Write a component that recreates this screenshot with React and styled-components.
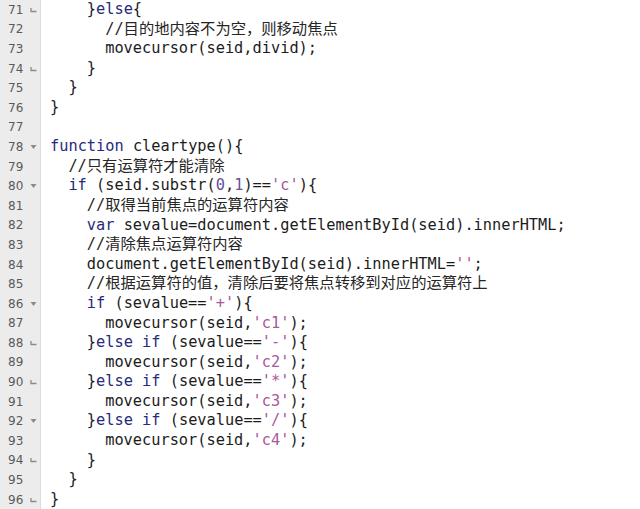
import React from 'react';
import styled, { createGlobalStyle } from 'styled-components';

const GlobalStyle = createGlobalStyle`
  html, body {
    margin: 0;
    padding: 0;
    background: #ffffff;
  }
`;

const LINE_H = 19.6;

const Editor = styled.div`
  display: flex;
  width: 640px;
  height: 509px;
  overflow: hidden;
  background: #ffffff;
`;

const Gutter = styled.div`
  width: 40px;
  flex-shrink: 0;
  background: #ececec;
  border-right: 1px solid #dcdcdc;
`;

const LineNo = styled.div`
  display: flex;
  align-items: center;
  height: ${LINE_H}px;
  padding-left: 8px;
  font-family: 'DejaVu Sans', 'Noto Sans', sans-serif;
  font-size: 12px;
  color: #5a5a5a;
`;

const Num = styled.span`
  width: 20px;
`;

const FoldBox = styled.span`
  display: flex;
  align-items: center;
  justify-content: center;
  width: 8px;
  margin-left: 1px;
`;

const Code = styled.div`
  flex: 1;
  padding-left: 9px;
  font-family: 'DejaVu Sans Mono', 'Noto Sans CJK SC', monospace;
  font-size: 15.3px;
  color: #1c1c1c;
`;

const CodeLine = styled.div`
  height: ${LINE_H}px;
  line-height: ${LINE_H}px;
  white-space: pre;
  padding-left: ${(p) => p.$indent * 18.4}px;
`;

const Kw = styled.span`
  color: #262a78;
`;

const Str = styled.span`
  color: #a8589a;
`;

const Digit = styled.span`
  color: #6450a0;
`;

const Comment = styled.span`
  color: #262626;
  font-family: 'DejaVu Sans Mono', 'Noto Sans CJK SC', monospace;
`;

const LINES = [
  [71, 'end', 2, '}else{'],
  [72, null, 3, '//目的地内容不为空，则移动焦点'],
  [73, null, 3, 'movecursor(seid,divid);'],
  [74, 'end', 2, '}'],
  [75, null, 1, '}'],
  [76, null, 0, '}'],
  [77, null, 0, ''],
  [78, 'open', 0, 'function cleartype(){'],
  [79, null, 1, '//只有运算符才能清除'],
  [80, 'open', 1, "if (seid.substr(0,1)=='c'){"],
  [81, null, 2, '//取得当前焦点的运算符内容'],
  [82, null, 2, 'var sevalue=document.getElementById(seid).innerHTML;'],
  [83, null, 2, '//清除焦点运算符内容'],
  [84, null, 2, "document.getElementById(seid).innerHTML='';"],
  [85, null, 2, '//根据运算符的值，清除后要将焦点转移到对应的运算符上'],
  [86, 'open', 2, "if (sevalue=='+'){"],
  [87, null, 3, "movecursor(seid,'c1');"],
  [88, 'end', 2, "}else if (sevalue=='-'){"],
  [89, null, 3, "movecursor(seid,'c2');"],
  [90, 'end', 2, "}else if (sevalue=='*'){"],
  [91, null, 3, "movecursor(seid,'c3');"],
  [92, 'open', 2, "}else if (sevalue=='/'){"],
  [93, null, 3, "movecursor(seid,'c4');"],
  [94, 'end', 2, '}'],
  [95, null, 1, '}'],
  [96, 'end', 0, '}'],
];

// split a line into coloured pieces
function highlight(text) {
  if (text.startsWith('//')) return [<Comment key="c">{text}</Comment>];
  const re = /('[^']*')|\b(function|if|else|var)\b|\b(\d+)\b/g;
  const out = [];
  let last = 0;
  let m;
  let k = 0;
  while ((m = re.exec(text))) {
    if (m.index > last) out.push(text.slice(last, m.index));
    if (m[1]) out.push(<Str key={k++}>{m[1]}</Str>);
    else if (m[2]) out.push(<Kw key={k++}>{m[2]}</Kw>);
    else out.push(<Digit key={k++}>{m[3]}</Digit>);
    last = re.lastIndex;
  }
  if (last < text.length) out.push(text.slice(last));
  return out;
}

function FoldMark({ type }) {
  if (type === 'open') {
    return (
      <svg width="7" height="6" viewBox="0 0 7 6">
        <path d="M0.5 1 L6.5 1 L3.5 5 Z" fill="#8a8a8a" />
      </svg>
    );
  }
  if (type === 'end') {
    return (
      <svg width="7" height="6" viewBox="0 0 7 6">
        <path d="M1 1 L1 4.5 L6.5 4.5" fill="none" stroke="#8a8a8a" strokeWidth="1.3" />
      </svg>
    );
  }
  return null;
}

export default function App() {
  return (
    <>
      <GlobalStyle />
      <Editor>
        <Gutter>
          {LINES.map(([n, fold]) => (
            <LineNo key={n}>
              <Num>{n}</Num>
              <FoldBox>
                <FoldMark type={fold} />
              </FoldBox>
            </LineNo>
          ))}
        </Gutter>
        <Code>
          {LINES.map(([n, , indent, text]) => (
            <CodeLine key={n} $indent={indent}>
              {highlight(text)}
            </CodeLine>
          ))}
        </Code>
      </Editor>
    </>
  );
}
